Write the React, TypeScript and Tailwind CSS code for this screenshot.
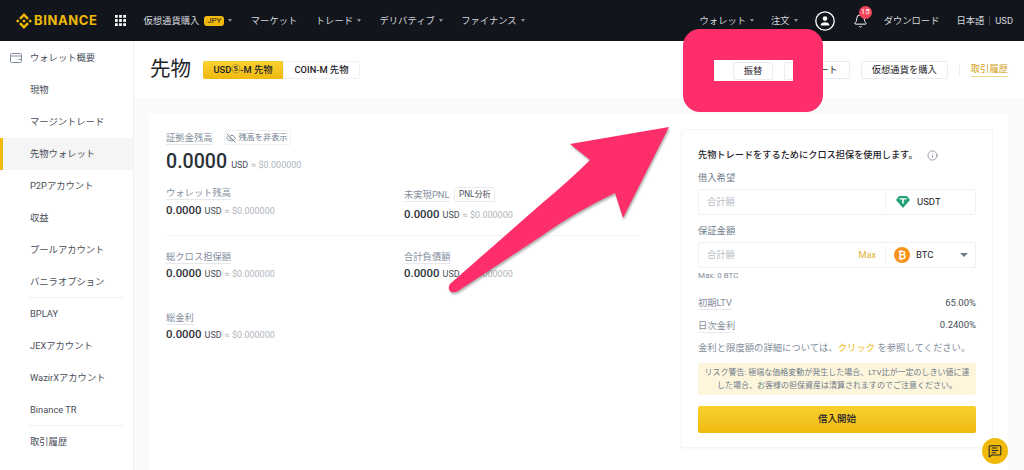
import React from 'react';
import { Bell, EyeOff, Info, MessageSquareText } from 'lucide-react';
import { SiBinance } from 'react-icons/si';

const SIDE_ITEMS = [
  { label: '現物' },
  { label: 'マージントレード' },
  { label: '先物ウォレット', active: true },
  { label: 'P2Pアカウント' },
  { label: '収益' },
  { label: 'プールアカウント' },
  { label: 'バニラオプション', divider: true },
  { label: 'BPLAY' },
  { label: 'JEXアカウント' },
  { label: 'WazirXアカウント' },
  { label: 'Binance TR', divider: true },
  { label: '取引履歴' },
];

const Caret = () => (
  <span className="ml-[4px] inline-block w-0 h-0 border-x-[2.5px] border-x-transparent border-t-[3px] border-t-[#848e9c]" />
);

const NavItem = ({ label, caret }: { label: string; caret?: boolean }) => (
  <div className="flex items-center whitespace-nowrap">
    <span>{label}</span>
    {caret && <Caret />}
  </div>
);

const Label = ({ children }: { children: React.ReactNode }) => (
  <span className="block w-fit text-[9.3px] leading-[13px] text-[#848e9c] border-b border-[#e6e8ea] whitespace-nowrap">
    {children}
  </span>
);

const Amount = () => (
  <div className="flex items-baseline whitespace-nowrap">
    <span className="text-[11.4px] leading-[18px] font-medium text-[#2b3139]">0.0000</span>
    <span className="ml-[3px] text-[9px] text-[#474d57]">USD</span>
    <span className="ml-[3px] text-[9px] text-[#aeb4bc]">≈ $0.000000</span>
  </div>
);

export default function App() {
  return (
    <div className="relative w-[1024px] h-[470px] overflow-hidden bg-white font-['Roboto','Noto_Sans_CJK_JP',sans-serif]">
      {/* Top Nav */}
      <div className="h-[41px] bg-[#12161c] flex items-center pl-[16px] pr-[11px] text-[9.3px] text-[#d5d8dc]">
        <div className="flex items-center text-[#f0b90b]">
          <SiBinance className="w-[16px] h-[16px]" />
          <span className="ml-[2px] font-['Inter'] text-[13px] font-bold tracking-[0.6px]">BINANCE</span>
        </div>
        <svg className="ml-[17px] mr-[18px]" width="11" height="11" viewBox="0 0 12 12" fill="#fff">
          {[0, 4.5, 9].map(y =>
            [0, 4.5, 9].map(x => <rect key={`${x}-${y}`} x={x} y={y} width="3" height="3" />)
          )}
        </svg>
        <div className="flex items-center gap-[18.5px]">
          <div className="flex items-center whitespace-nowrap">
            <span>仮想通貨購入</span>
            <span className="ml-[5px] w-[20px] h-[10px] flex items-center justify-center rounded-[3px] bg-[#f0b90b] text-[8px] text-[#1e2329]">JPY</span>
            <Caret />
          </div>
          <NavItem label="マーケット" />
          <NavItem label="トレード" caret />
          <NavItem label="デリバティブ" caret />
          <NavItem label="ファイナンス" caret />
        </div>
        <div className="ml-auto flex items-center">
          <NavItem label="ウォレット" caret />
          <div className="ml-[17px]"><NavItem label="注文" caret /></div>
          <svg className="ml-[17px]" width="20" height="20" viewBox="0 0 20 20" fill="none">
            <circle cx="10" cy="10" r="9.2" stroke="#fff" strokeWidth="1.3" />
            <circle cx="10" cy="7.6" r="2.3" fill="#fff" />
            <path d="M5.6 14.6c0-2.4 2-3.4 4.4-3.4s4.4 1 4.4 3.4z" fill="#fff" />
          </svg>
          <div className="relative ml-[18px] w-[14px] h-[16px]">
            <Bell className="w-[15px] h-[16px] text-white" strokeWidth={1.6} />
            <span className="absolute -top-[7px] left-[6px] w-[13px] h-[13px] rounded-full bg-[#f6465d] text-white text-[8px] flex items-center justify-center">15</span>
          </div>
          <span className="ml-[17px] whitespace-nowrap">ダウンロード</span>
          <span className="ml-[17px] whitespace-nowrap">日本語</span>
          <span className="mx-[5px] w-px h-[9px] bg-[#474d57]" />
          <span>USD</span>
        </div>
      </div>

      <div className="flex h-[429px]">
        {/* Sidebar */}
        <div className="w-[134px] shrink-0 border-r border-[#f0f1f2] pt-[1px] text-[9.3px] text-[#474d57]">
          <div className="h-[32px] flex items-center pl-[10px] whitespace-nowrap">
            <svg className="mr-[8px]" width="12" height="10" viewBox="0 0 12 10" fill="none" stroke="#848e9c" strokeWidth="1">
              <rect x="0.5" y="0.5" width="11" height="9" rx="1" />
              <path d="M0.5 3h11M8.5 6.5h3" />
            </svg>
            <span>ウォレット概要</span>
          </div>
          {SIDE_ITEMS.map(item => (
            <div key={item.label}>
              <div className={`h-[32px] flex items-center pl-[27px] border-l-[3px] whitespace-nowrap ${item.active ? 'border-l-[#f0b90b] bg-[#f5f5f5]' : 'border-l-transparent'}`}>
                <span>{item.label}</span>
              </div>
              {item.divider && <div className="h-px -mt-px ml-[29px] mr-[10px] bg-[#f0f1f2]" />}
            </div>
          ))}
        </div>

        {/* Main */}
        <div className="flex-1 min-w-0 bg-[#fafafa] flex flex-col">
          <div className="h-[57px] bg-white flex items-center pl-[16px] pr-[16px]">
            <h1 className="text-[20.5px] text-[#1e2329] leading-none">先物</h1>
            <div className="ml-[12px] flex h-[18px] text-[9.3px] font-medium text-[#1e2329]">
              <div className="w-[80px] rounded-l-[2px] bg-gradient-to-b from-[#f8d12f] to-[#f0b90b] flex items-center justify-center">USD<span className="text-[9px]">Ⓢ</span>-M 先物</div>
              <div className="w-[77px] rounded-r-[2px] border border-[#f0f1f2] flex items-center justify-center">COIN-M 先物</div>
            </div>
            <div className="ml-auto flex items-center text-[9.3px] text-[#1e2329]">
              <div className="w-[40px] h-[18px] rounded-[2px] border border-[#eaecef] flex items-center justify-center">振替</div>
              <div className="ml-[11px] w-[67px] h-[18px] pr-[11px] rounded-[2px] border border-[#eaecef] flex items-center justify-end">コンバート</div>
              <div className="ml-[11px] w-[87px] h-[18px] rounded-[2px] border border-[#eaecef] flex items-center justify-center">仮想通貨を購入</div>
              <span className="ml-[11px] w-px h-[11px] bg-[#eaecef]" />
              <span className="ml-[11px] text-[#d4a017] border-b border-[#f0d98a] whitespace-nowrap">取引履歴</span>
            </div>
          </div>

          <div className="flex-1 min-h-0 pt-[16px] pl-[15px] pr-[16px]">
            <div className="h-full bg-white flex pl-[17px] pr-[15px] pt-[15px]">
              {/* Balances */}
              <div className="w-[474px] shrink-0 pt-[1px]">
                <div className="flex items-center h-[15px]">
                  <Label>証拠金残高</Label>
                  <div className="ml-[11px] h-[15px] w-[67px] rounded-[2px] border border-[#f0f1f2] flex items-center justify-center text-[8.2px] text-[#707a8a] whitespace-nowrap">
                    <EyeOff className="w-[10px] h-[10px] mr-[2px]" />残高を非表示
                  </div>
                </div>
                <div className="flex items-baseline whitespace-nowrap mt-[5px]">
                  <span className="text-[19.6px] leading-[24px] font-medium text-[#2b3139]">0.0000</span>
                  <span className="ml-[4px] text-[9px] text-[#474d57]">USD</span>
                  <span className="ml-[3px] text-[9px] text-[#aeb4bc]">≈ $0.000000</span>
                </div>
                <div className="grid grid-cols-[238px_1fr] mt-[12px] pb-[12px] border-b border-[#f5f5f5]">
                  <div>
                    <Label>ウォレット残高</Label>
                    <div className="mt-[1px]"><Amount /></div>
                  </div>
                  <div>
                    <div className="flex items-center h-[15px] mt-[1px]">
                      <Label>未実現PNL</Label>
                      <div className="ml-[5px] w-[41px] h-[15px] rounded-[2px] border border-[#eaecef] flex items-center justify-center text-[8.2px] text-[#474d57]">PNL分析</div>
                    </div>
                    <div className="mt-[3px]"><Amount /></div>
                  </div>
                </div>
                <div className="grid grid-cols-[238px_1fr] mt-[14px]">
                  <div>
                    <Label>総クロス担保額</Label>
                    <Amount />
                  </div>
                  <div>
                    <Label>合計負債額</Label>
                    <Amount />
                  </div>
                </div>
                <div className="mt-[29px]">
                  <Label>総金利</Label>
                  <Amount />
                </div>
              </div>

              {/* Loan Form */}
              <div className="ml-auto w-[312px] h-[319px] rounded-[2px] bg-white border border-[#f5f5f5] shadow-[0_1px_2px_rgba(0,0,0,0.03)] px-[16px] pt-[18px]">
                <div className="flex items-center text-[9.2px] leading-[14px] font-medium text-[#1e2329] whitespace-nowrap">
                  先物トレードをするためにクロス担保を使用します。
                  <Info className="ml-[9px] w-[11px] h-[11px] text-[#707a8a]" strokeWidth={1.5} />
                </div>
                <div className="mt-[9px] text-[9.3px] leading-[14px] text-[#707a8a]">借入希望</div>
                <div className="mt-[4px] h-[26px] rounded-[2px] border border-[#f0f1f2] flex items-center pl-[8px]">
                  <span className="flex-1 text-[9.3px] text-[#b7bdc6]">合計額</span>
                  <span className="w-px h-[18px] bg-[#f0f1f2]" />
                  <svg className="ml-[10px]" width="14" height="12" viewBox="0 0 14 12">
                    <path d="M3 0h8l3 4-7 8-7-8z" fill="#26a17b" />
                    <path d="M3.5 2.2h7v1.4H7.8v4H6.2v-4H3.5z" fill="#fff" />
                  </svg>
                  <span className="ml-[7px] w-[58px] text-[9.5px] text-[#1e2329]">USDT</span>
                </div>
                <div className="mt-[9px] text-[9.3px] leading-[14px] text-[#707a8a]">保証金額</div>
                <div className="mt-[4px] h-[26px] rounded-[2px] border border-[#f0f1f2] flex items-center pl-[8px]">
                  <span className="flex-1 text-[9.3px] text-[#b7bdc6]">合計額</span>
                  <span className="mr-[9px] text-[9.2px] text-[#e0b12f]">Max</span>
                  <span className="w-px h-[18px] bg-[#f0f1f2]" />
                  <span className="ml-[8px] w-[16px] h-[16px] rounded-full bg-[#f7931a] text-white text-[10px] font-bold flex items-center justify-center">₿</span>
                  <span className="ml-[6px] w-[44px] text-[9.5px] text-[#1e2329]">BTC</span>
                  <span className="mr-[7px] w-0 h-0 border-x-[4px] border-x-transparent border-t-[4px] border-t-[#707a8a]" />
                </div>
                <div className="mt-[3px] text-[8px] leading-[10px] text-[#848e9c]">Max: 0 BTC</div>
                <div className="mt-[15px] flex justify-between items-end">
                  <Label>初期LTV</Label>
                  <span className="text-[9.5px] text-[#474d57]">65.00%</span>
                </div>
                <div className="mt-[8px] flex justify-between items-end">
                  <Label>日次金利</Label>
                  <span className="text-[9.5px] text-[#474d57]">0.2400%</span>
                </div>
                <div className="mt-[8px] text-[9.35px] leading-[14px] text-[#848e9c] whitespace-nowrap">
                  金利と限度額の詳細については、<span className="text-[#f0b90b]">クリック</span> を参照してください。
                </div>
                <div className="mt-[8px] h-[32px] rounded-[2px] bg-[#fdf6dc] flex flex-col items-center justify-center text-[8px] leading-[13px] text-[#707a8a] whitespace-nowrap">
                  <div>リスク警告: 極端な価格変動が発生した場合、LTV比が一定のしきい値に達</div>
                  <div>した場合、お客様の担保資産は清算されますのでご注意ください。</div>
                </div>
                <div className="mt-[11px] h-[27px] rounded-[2px] bg-gradient-to-b from-[#f8d12f] to-[#f0b90b] flex items-center justify-center text-[9.5px] font-medium text-[#1e2329]">借入開始</div>
              </div>
            </div>
          </div>
        </div>
      </div>

      {/* Chat Button */}
      <div className="absolute left-[982px] top-[438px] w-[26px] h-[26px] rounded-full bg-[#f0b90b] flex items-center justify-center">
        <MessageSquareText className="w-[14px] h-[14px] text-[#1e2329]" strokeWidth={1.8} />
      </div>

      {/* Annotation overlays */}
      <div className="absolute left-[683px] top-[29px] w-[140px] h-[83px] rounded-[17px] bg-[#fe2e6a]" />
      <div className="absolute left-[714px] top-[60px] w-[79px] h-[21px] bg-white flex items-center text-[9.3px] text-[#1e2329]">
        <div className="ml-[19px] w-[40px] h-[18px] rounded-[2px] border border-[#eaecef] flex items-center justify-center">振替</div>
        <div className="ml-[11px] flex-1 h-[18px] rounded-l-[2px] border border-r-0 border-[#eaecef]" />
      </div>
      <svg className="absolute left-0 top-0 pointer-events-none drop-shadow-[1px_2px_1px_rgba(0,0,0,0.3)]" width="1024" height="470" viewBox="0 0 1024 470">
        <path
          d="M669 127 L570 144 L590 160 Q570 180 540 205 L450 284 Q447 289 451 292 Q454 293 458 291 L540 237 Q575 212 615 193 L623 218 Z"
          fill="#fe2e6a"
        />
      </svg>
    </div>
  );
}
